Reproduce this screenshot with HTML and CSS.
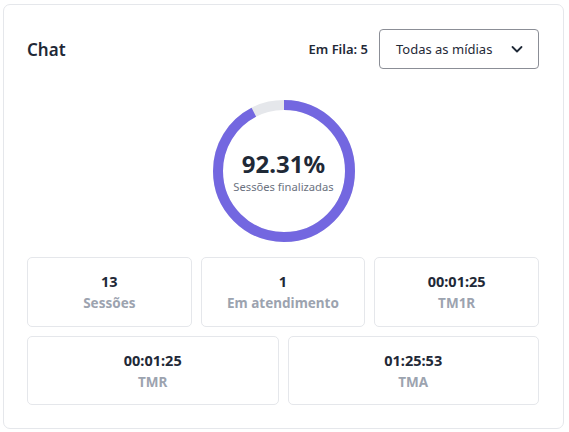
FILE: index.html
```html
<!DOCTYPE html>
<html lang="pt">
<head>
<meta charset="utf-8">
<link rel="stylesheet" href="styles.css">
</head>
<body>
<div class="card">
  <div class="header">
    <h2 class="title">Chat</h2>
    <div class="controls">
      <span class="queue">Em Fila: 5</span>
      <div class="select">
        <span>Todas as mídias</span>
        <svg class="chev" width="14" height="14" viewBox="0 0 14 14"><path d="M2.5 5 L7 9.5 L11.5 5" fill="none" stroke="#1f2937" stroke-width="1.8" stroke-linecap="round" stroke-linejoin="round"/></svg>
      </div>
    </div>
  </div>
  <div class="donut-wrap">
    <div class="donut">
      <svg width="142" height="142" viewBox="0 0 142 142">
        <circle cx="71" cy="71" r="66" fill="none" stroke="#e5e7eb" stroke-width="10"/>
        <circle cx="71" cy="71" r="66" fill="none" stroke="#7367e0" stroke-width="10" stroke-dasharray="382.7 414.7" transform="rotate(-90 71 71)"/>
      </svg>
      <div class="donut-text">
        <div class="pct">92.31%</div>
        <div class="pct-label">Sessões finalizadas</div>
      </div>
    </div>
  </div>
  <div class="row row3">
    <div class="stat"><div class="val">13</div><div class="lbl">Sessões</div></div>
    <div class="stat"><div class="val">1</div><div class="lbl">Em atendimento</div></div>
    <div class="stat"><div class="val">00:01:25</div><div class="lbl">TM1R</div></div>
  </div>
  <div class="row row2">
    <div class="stat"><div class="val">00:01:25</div><div class="lbl">TMR</div></div>
    <div class="stat"><div class="val">01:25:53</div><div class="lbl">TMA</div></div>
  </div>
</div>
</body>
</html>
```
FILE: styles.css
```css
* { box-sizing: border-box; }
html, body { margin: 0; padding: 0; background: #ffffff; }
body {
  font-family: "Segoe UI", "Noto Sans", "Open Sans", sans-serif;
  color: #1f2937;
  padding: 4px 5px 3px 3px;
}
.card {
  width: 561px;
  height: 425px;
  border: 1px solid #e5e7eb;
  border-radius: 7px;
  padding: 23px 24px 24px 23px;
}
.header {
  display: flex;
  align-items: center;
  justify-content: space-between;
  height: 41px;
  padding-top: 1px;
}
.title {
  margin: 0;
  font-size: 17px;
  font-weight: 600;
  color: #1f2937;
}
.controls {
  display: flex;
  align-items: center;
  gap: 11px;
}
.queue {
  font-size: 13px;
  font-weight: 600;
  color: #1f2937;
}
.select {
  width: 160px;
  height: 40px;
  border: 1px solid #8b8e96;
  border-radius: 4px;
  display: flex;
  align-items: center;
  justify-content: space-between;
  padding: 0 14px 0 16px;
  font-size: 13px;
  color: #1f2937;
}
.chev { display: block; }
.donut-wrap {
  display: flex;
  justify-content: center;
  margin-top: 31px;
  padding-left: 1px;
}
.donut {
  position: relative;
  width: 142px;
  height: 142px;
}
.donut svg { display: block; }
.donut-text {
  position: absolute;
  inset: 0;
  display: flex;
  flex-direction: column;
  align-items: center;
  justify-content: center;
  padding-top: 3px;
}
.pct {
  font-size: 24px;
  font-weight: 700;
  line-height: 26px;
  color: #1f2937;
}
.pct-label {
  font-size: 11.2px;
  color: #6b7280;
  line-height: 14px;
  margin-top: 3px;
}
.row {
  display: grid;
  gap: 9px;
}
.row3 {
  grid-template-columns: 1fr 1fr 1fr;
  margin-top: 15px;
}
.row2 {
  grid-template-columns: 1fr 1fr;
  margin-top: 9px;
}
.stat {
  height: 70px;
  border: 1px solid #e5e7eb;
  border-radius: 5px;
  display: flex;
  flex-direction: column;
  align-items: center;
  justify-content: center;
}
.row2 .stat { height: 69px; }
.val {
  font-size: 14.5px;
  font-weight: 700;
  line-height: 20px;
  color: #1f2937;
}
.lbl {
  font-size: 13.5px;
  font-weight: 700;
  line-height: 20px;
  color: #9ca3af;
  margin-top: 2px;
}
```
